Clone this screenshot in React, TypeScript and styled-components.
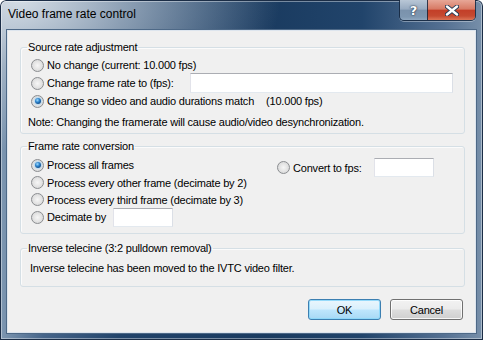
import React from "react";
import styled, { createGlobalStyle } from "styled-components";

const Global = createGlobalStyle`
  html, body {
    margin: 0;
    padding: 0;
    background: #fff;
  }
  body {
    width: 483px;
    height: 340px;
    overflow: hidden;
    font-family: "Liberation Sans", Arial, sans-serif;
    font-size: 11px;
    color: #000;
  }
`;

const Window = styled.div`
  width: 483px;
  height: 340px;
  box-sizing: border-box;
  display: flex;
  flex-direction: column;
  border-radius: 6px 6px 0 0;
  background:
    radial-gradient(ellipse 260px 150px at 20px 0px, rgba(214, 222, 230, 0.97), rgba(176, 190, 205, 0.7) 45%, rgba(150, 172, 196, 0) 100%),
    linear-gradient(90deg, #7f98b2 0%, #46658a 9%, #21436a 25%, #1a3b60 55%, #21446b 75%, #557193 92%, #7890aa 100%);
  box-shadow: inset 0 0 0 1px #1b2d46, inset 0 0 0 2px rgba(255, 255, 255, 0.4);
`;

const TitleBar = styled.div`
  height: 30px;
  display: flex;
  align-items: flex-start;
  padding-left: 8px;
`;

const Title = styled.div`
  padding-top: 7px;
  font-size: 12px;
  line-height: 15px;
  color: #000;
`;

const Captions = styled.div`
  margin-left: auto;
  margin-right: 7px;
  display: flex;
  height: 20px;
  border: 1px solid rgba(20, 38, 62, 0.85);
  border-top: none;
  border-radius: 0 0 5px 5px;
  overflow: hidden;
  box-shadow: 0 1px 0 rgba(255, 255, 255, 0.35);
`;

const CaptionButton = styled.div<{ $close?: boolean }>`
  width: ${(p) => (p.$close ? 47 : 27)}px;
  display: flex;
  align-items: center;
  justify-content: center;
  color: #fff;
  font-family: "DejaVu Sans", sans-serif;
  font-weight: bold;
  font-size: 13px;
  text-shadow: 0 0 2px #1d2f46, 0 0 1px #1d2f46;
  border-left: ${(p) => (p.$close ? "1px solid rgba(20, 38, 62, 0.85)" : "none")};
  background: ${(p) =>
    p.$close
      ? "linear-gradient(#e7a797 0%, #d77a65 45%, #c33f28 52%, #c54a31 80%, #dc7456 100%)"
      : "linear-gradient(#b9c7d6 0%, #98abc1 45%, #7a92ac 52%, #7e97b1 85%, #90a8c0 100%)"};
`;

const Client = styled.div`
  flex: 1;
  margin: 0 7px 7px 7px;
  border: 1px solid #dde5ee;
  box-shadow: 0 0 0 1px #4e6987;
  background: #f0f0f0;
  padding: 10px 10px 0 12px;
  display: flex;
  flex-direction: column;
  letter-spacing: -0.2px;
`;

const Group = styled.fieldset<{ $top: number }>`
  margin: ${(p) => p.$top}px 0 0;
  padding: 0;
  min-width: 0;
  border: 1px solid #d5dfe5;
  border-radius: 3px;
  box-shadow: inset 1px 1px 0 #fbfbfb;
`;

const Legend = styled.legend`
  margin-left: 6px;
  padding: 0 1px;
  font-size: 11px;
  line-height: 13px;
`;

const Body = styled.div<{ $pad: string }>`
  padding: ${(p) => p.$pad};
`;

const Row = styled.div<{ $h: number }>`
  display: flex;
  align-items: center;
  height: ${(p) => p.$h}px;
  white-space: nowrap;
`;

const Radio = styled.span<{ $checked?: boolean }>`
  width: 13px;
  height: 13px;
  flex: none;
  box-sizing: border-box;
  margin-right: 3px;
  border-radius: 50%;
  border: 1px solid #8b8d90;
  background: radial-gradient(circle at 50% 50%, #f6f6f6 0%, #e6e6e6 45%, #cfd0d1 100%);
  display: flex;
  align-items: center;
  justify-content: center;
  &::after {
    content: "";
    display: ${(p) => (p.$checked ? "block" : "none")};
    width: 6px;
    height: 6px;
    border-radius: 50%;
    background: radial-gradient(circle at 40% 35%, #9fdcff 0%, #2b82cc 40%, #114b88 75%, #0a3564 100%);
    box-shadow: 0 0 1px 1px rgba(150, 205, 245, 0.55);
  }
`;

const TextBox = styled.span<{ $w?: number; $h: number }>`
  display: block;
  box-sizing: border-box;
  height: ${(p) => p.$h}px;
  width: ${(p) => (p.$w ? `${p.$w}px` : "auto")};
  background: #fff;
  border: 1px solid;
  border-color: #abadb3 #dbdfe6 #e3e9ef #e2e3ea;
`;

const WideBox = styled(TextBox)`
  flex: 0 0 263px;
  margin-left: auto;
`;

const Fps = styled.span`
  margin-left: 12px;
`;

const Note = styled.div`
  margin: 6px 0 0 -3px;
  line-height: 13px;
`;

const Columns = styled.div`
  display: grid;
  grid-template-columns: 246px 157px;
  padding: 3px 11px 7px 10px;
`;

const RightCol = styled.div`
  margin-top: 2px;
`;

const PushRight = styled.span`
  margin-left: auto;
`;

const Inline = styled.span`
  margin-left: 7px;
`;

const Plain = styled.div`
  line-height: 13px;
`;

const ButtonRow = styled.div`
  display: flex;
  justify-content: flex-end;
  gap: 9px;
  margin: 12px 2px 0 0;
`;

const Button = styled.div<{ $default?: boolean }>`
  width: 73px;
  height: 21px;
  box-sizing: border-box;
  display: flex;
  align-items: center;
  justify-content: center;
  border-radius: 3px;
  border: 1px solid ${(p) => (p.$default ? "#3c7fb1" : "#707070")};
  background: ${(p) =>
    p.$default
      ? "linear-gradient(#eaf6fd 0%, #d9f0fc 48%, #bee6fd 52%, #a7d9f5 100%)"
      : "linear-gradient(#f2f2f2 0%, #ebebeb 48%, #dddddd 52%, #cfcfcf 100%)"};
  box-shadow: inset 0 0 0 1px ${(p) => (p.$default ? "rgba(140, 215, 250, 0.9)" : "rgba(255, 255, 255, 0.8)")};
`;

const CloseGlyph = () => (
  <svg width="14" height="11" viewBox="0 0 14 11">
    <path d="M2 1.5 L12 9.5 M12 1.5 L2 9.5" stroke="#243a55" strokeWidth="4.2" strokeLinecap="round" />
    <path d="M2 1.5 L12 9.5 M12 1.5 L2 9.5" stroke="#fff" strokeWidth="2.4" strokeLinecap="round" />
  </svg>
);

const App = () => {
  return (
    <>
      <Global />
      <Window>
        <TitleBar>
          <Title>Video frame rate control</Title>
          <Captions>
            <CaptionButton>?</CaptionButton>
            <CaptionButton $close>
              <CloseGlyph />
            </CaptionButton>
          </Captions>
        </TitleBar>
        <Client>
          <Group $top={0}>
            <Legend>Source rate adjustment</Legend>
            <Body $pad="2px 11px 4px 10px">
              <Row $h={18}>
                <Radio />
                No change (current: 10.000 fps)
              </Row>
              <Row $h={18}>
                <Radio />
                Change frame rate to (fps):
                <WideBox $h={20} />
              </Row>
              <Row $h={18}>
                <Radio $checked />
                Change so video and audio durations match
                <Fps>(10.000 fps)</Fps>
              </Row>
              <Note>Note: Changing the framerate will cause audio/video desynchronization.</Note>
            </Body>
          </Group>

          <Group $top={6}>
            <Legend>Frame rate conversion</Legend>
            <Columns>
              <div>
                <Row $h={18}>
                  <Radio $checked />
                  Process all frames
                </Row>
                <Row $h={17}>
                  <Radio />
                  Process every other frame (decimate by 2)
                </Row>
                <Row $h={17}>
                  <Radio />
                  Process every third frame (decimate by 3)
                </Row>
                <Row $h={18}>
                  <Radio />
                  Decimate by
                  <Inline>
                    <TextBox $w={60} $h={19} />
                  </Inline>
                </Row>
              </div>
              <RightCol>
                <Row $h={19}>
                  <Radio />
                  Convert to fps:
                  <PushRight>
                    <TextBox $w={60} $h={19} />
                  </PushRight>
                </Row>
              </RightCol>
            </Columns>
          </Group>

          <Group $top={8}>
            <Legend>Inverse telecine (3:2 pulldown removal)</Legend>
            <Body $pad="7px 10px 11px 9px">
              <Plain>Inverse telecine has been moved to the IVTC video filter.</Plain>
            </Body>
          </Group>

          <ButtonRow>
            <Button $default>OK</Button>
            <Button>Cancel</Button>
          </ButtonRow>
        </Client>
      </Window>
    </>
  );
};

export default App;
